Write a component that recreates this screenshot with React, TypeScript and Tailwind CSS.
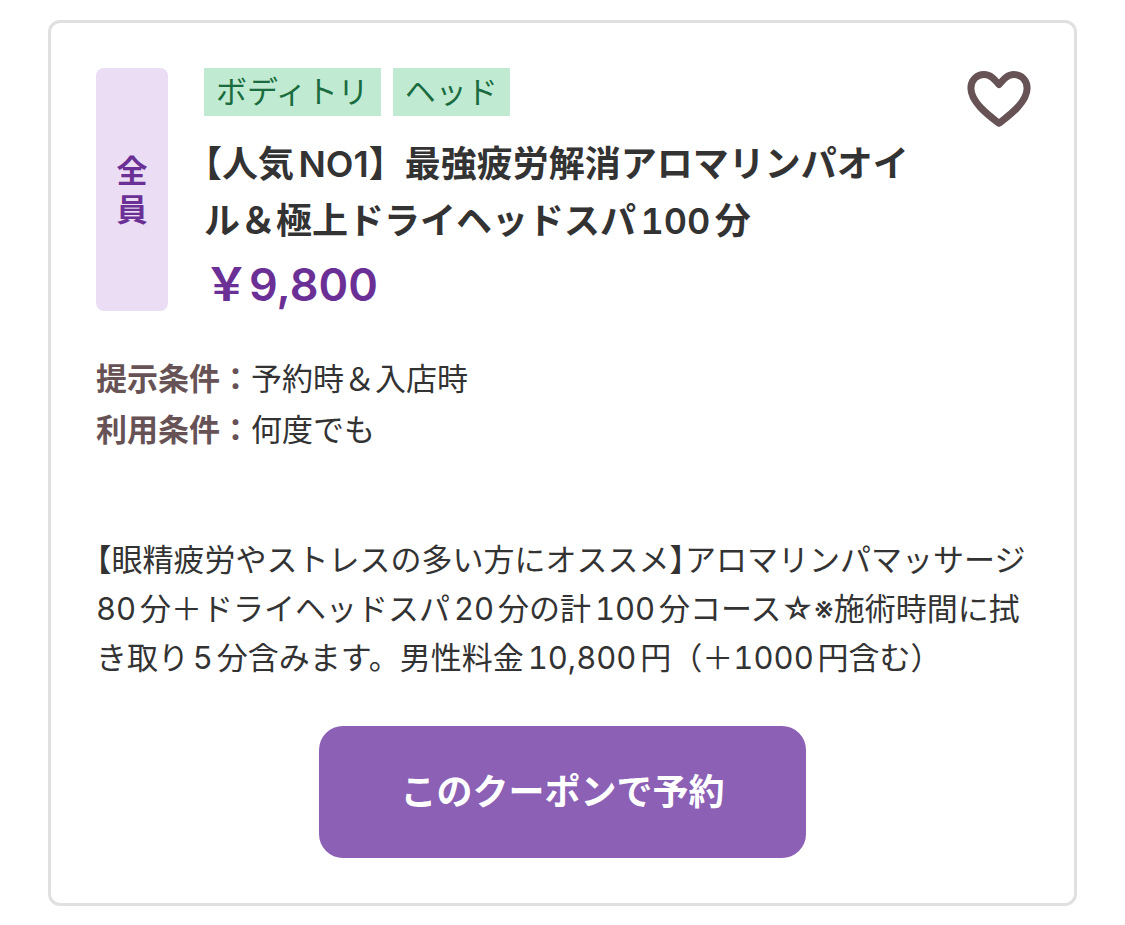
import React, { useState } from "react";

interface Coupon {
  target: string;
  tags: string[];
  title: string;
  price: string;
  conditions: { label: string; value: string }[];
  description: string;
}

const coupon: Coupon = {
  target: "全員",
  tags: ["ボディトリ", "ヘッド"],
  title: "【人気NO1】最強疲労解消アロマリンパオイル＆極上ドライヘッドスパ100分",
  price: "9,800",
  conditions: [
    { label: "提示条件", value: "予約時＆入店時" },
    { label: "利用条件", value: "何度でも" },
  ],
  description:
    "【眼精疲労やストレスの多い方にオススメ】アロマリンパマッサージ80分＋ドライヘッドスパ20分の計100分コース☆※施術時間に拭き取り5分含みます。男性料金10,800円（＋1000円含む）",
};

function FavoriteButton() {
  const [active, setActive] = useState(false);

  return (
    <button
      type="button"
      aria-label="お気に入り"
      aria-pressed={active}
      onClick={() => setActive(!active)}
      className="mt-[3px] h-14 w-16 shrink-0 cursor-pointer text-[#675356]"
    >
      <svg
        viewBox="-2 0 64 56"
        className="h-14 w-16 overflow-visible"
        fill={active ? "currentColor" : "none"}
      >
        <path
          d="M32 52.3C22.5 45 3.9 31.5 3.9 17.3C3.9 9 9.6 3.6 17 3.6C24 3.6 27.8 8.6 32 13.6C36.2 8.6 40 3.6 47 3.6C54.4 3.6 60.1 9 60.1 17.3C60.1 31.5 41.5 45 32 52.3Z"
          stroke="currentColor"
          strokeWidth="7"
          strokeLinejoin="round"
        />
      </svg>
    </button>
  );
}

function CouponCard({ coupon }: { coupon: Coupon }) {
  return (
    <article className="rounded-xl border-3 border-[#e0e0e0] bg-white p-[45px]">
      <div className="flex">
        <div className="flex w-[72px] shrink-0 items-center justify-center rounded-lg bg-[#eaddf4]">
          <p className="w-[31px] text-center text-[31px] leading-[39px] font-bold break-all text-[#6b3096]">
            {coupon.target}
          </p>
        </div>
        <div className="ml-9 min-w-0 flex-1">
          <ul className="flex gap-3">
            {coupon.tags.map((tag) => (
              <li key={tag} className="bg-[#c0ebd2] px-3 text-[31px] leading-[48px] text-[#1a6b40]">
                {tag}
              </li>
            ))}
          </ul>
          <h2 className="mt-5 pr-8 text-[36px] leading-[57px] font-semibold tabular-nums first-line:[font-variant-numeric:normal]">
            {coupon.title}
          </h2>
          <p className="pt-2 text-[45px] leading-[53px] font-semibold text-[#6b3096]">
            ￥{coupon.price}
          </p>
        </div>
        <FavoriteButton />
      </div>

      <dl className="mt-[42px] text-[31px] leading-[51px]">
        {coupon.conditions.map((c) => (
          <div key={c.label} className="flex">
            <dt className="font-bold text-[#675356]">{c.label}：</dt>
            <dd>{c.value}</dd>
          </div>
        ))}
      </dl>

      {/* half-width brackets in the lead line */}
      <p className="mt-20 text-[31px] leading-[49px] tabular-nums first-line:[font-feature-settings:'halt']">
        {coupon.description}
      </p>

      <button
        type="button"
        className="mx-auto mt-11 block h-[132px] w-[487px] max-w-full cursor-pointer rounded-3xl bg-[#8b60b5] text-[36px] font-bold text-white"
      >
        このクーポンで予約
      </button>
    </article>
  );
}

export default function App() {
  return (
    <main
      lang="ja"
      className="bg-white px-12 py-5 font-[Inter,'Noto_Sans_CJK_JP',sans-serif] text-[#333333] [text-autospace:normal] [text-spacing-trim:trim-start]"
    >
      <CouponCard coupon={coupon} />
    </main>
  );
}
